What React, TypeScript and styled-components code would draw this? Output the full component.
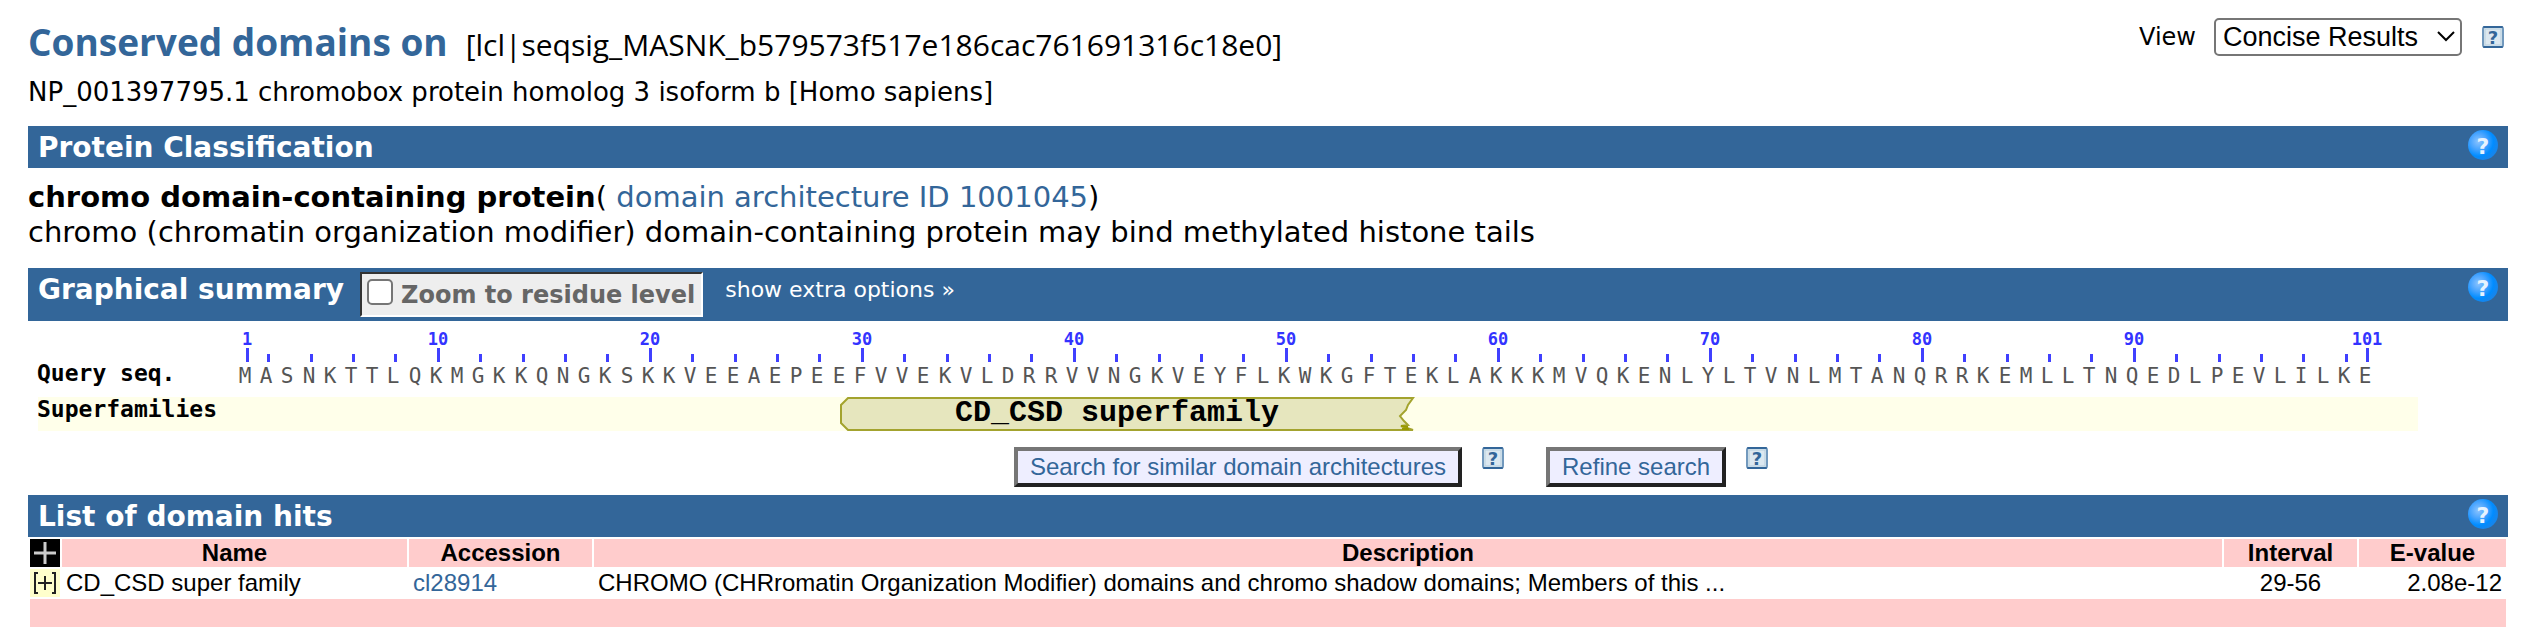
import React from "react";
import styled, { createGlobalStyle } from "styled-components";

const BLUE = "#336699";
const VERDANA = `Verdana, "DejaVu Sans", sans-serif`;
const ARIAL = `"Liberation Sans", Arial, sans-serif`;
const FIXED = `"DejaVu Sans Mono", monospace`;

const GlobalStyle = createGlobalStyle`
  *, *::before, *::after { box-sizing: border-box; }
  body {
    margin: 0;
    background: #fff;
    color: #000;
    font-family: ${VERDANA};
  }
`;

const Page = styled.main`
  padding: 16px 22px 16px 28px;
`;

const Header = styled.header`
  display: flex;
  justify-content: space-between;
  align-items: flex-start;
  margin-bottom: 18px;
`;

const Title = styled.h1`
  display: flex;
  align-items: baseline;
  gap: 18px;
  margin: 0 0 8px;
  font: bold 37px/52px "Open Sans", sans-serif;
  color: ${BLUE};
`;

const QueryId = styled.span`
  font-size: 30px;
  line-height: 40px;
  font-weight: normal;
  color: #000;
`;

const Subtitle = styled.p`
  margin: 0;
  font-size: 26px;
  line-height: 32px;
`;

const ViewControls = styled.div`
  display: flex;
  align-items: center;
  padding: 2px 4px 0 0;
`;

const ViewLabel = styled.label`
  margin-right: 18px;
  font-size: 24px;
`;

const SelectBox = styled.div`
  position: relative;
  display: flex;
  margin-right: 20px;
`;

const Select = styled.select`
  appearance: none;
  width: 248px;
  height: 38px;
  padding: 0 32px 0 7px;
  border: 2px solid #767676;
  border-radius: 5px;
  background: #fff;
  color: #000;
  font: 27px/34px ${ARIAL};
`;

const Chevron = styled.svg`
  position: absolute;
  right: 7px;
  top: 13px;
  pointer-events: none;
`;

const IconButton = styled.button`
  display: block;
  flex: none;
  padding: 0;
  border: 0;
  background: none;
  cursor: pointer;

  svg { display: block; }
`;

const HelpMark = styled.text`
  font-family: "DejaVu Sans", sans-serif;
  font-weight: bold;
  text-anchor: middle;
`;

const SectionBar = styled.div`
  display: flex;
  align-items: flex-start;
  min-height: 42px;
  padding: 0 10px;
  background: ${BLUE};
  color: #fff;
`;

const SectionTitle = styled.h2`
  margin: 2px 0 0;
  font-size: 28px;
  line-height: 40px;
`;

const BarHelp = styled.div`
  margin: 4px 0 0 auto;
`;

const ZoomToggle = styled.label`
  display: flex;
  align-items: center;
  gap: 8px;
  height: 45px;
  margin: 4px 22px 4px 16px;
  padding: 0 6px 0 5px;
  border: 2px solid;
  border-color: #333 #fff #fff #333;
  background: #eee;
  color: #666;
  font-size: 24px;
  font-weight: bold;
`;

const Checkbox = styled.input`
  appearance: none;
  width: 26px;
  height: 26px;
  margin: 0 0 6px;
  border: 2px solid #767676;
  border-radius: 5px;
  background: #fff;
`;

const BarLink = styled.a`
  margin-top: 8px;
  color: #fff;
  font-size: 22px;
  line-height: 28px;
  text-decoration: none;
`;

const Classification = styled.section`
  padding: 12px 0 18px;
  font-size: 29px;
  line-height: 35px;

  p { margin: 0; }
`;

const Link = styled.a`
  color: ${BLUE};
  text-decoration: none;
`;

const Chart = styled.svg`
  display: block;
  width: 100%;
  height: auto;
`;

const TrackLabel = styled.text`
  font: bold 23px ${FIXED};
`;

const TickLabel = styled.text`
  font: bold 17px ${FIXED};
  fill: #3333ff;
  text-anchor: middle;
`;

const Residue = styled.text`
  font: 21px ${FIXED};
  fill: #555;
  text-anchor: middle;
`;

const DomainLabel = styled.text`
  font: bold 30px "Liberation Mono", monospace;
  text-anchor: middle;
`;

const Actions = styled.div`
  display: flex;
  justify-content: center;
  align-items: flex-start;
  gap: 20px;
  padding: 8px 0 8px 246px;
`;

const ActionGroup = styled.div`
  display: flex;
  align-items: flex-start;
  gap: 20px;
  margin-right: 22px;

  &:last-child { margin-right: 0; }
`;

const ActionButton = styled.button`
  height: 40px;
  padding: 0 12px;
  border: 4px solid;
  border-color: #767676 #222 #222 #767676;
  background: #eeeeff;
  color: ${BLUE};
  font: 24px/32px ${ARIAL};
  cursor: pointer;
`;

const HitsTable = styled.table`
  width: 100%;
  table-layout: fixed;
  border-collapse: separate;
  border-spacing: 2px;
  font: 24px/28px ${ARIAL};
`;

const Column = styled.col<{ $width?: number }>`
  ${({ $width }) => $width && `width: ${$width}px;`}
`;

const HeadCell = styled.th`
  height: 28px;
  padding: 0;
  background: #ffcccc;
`;

const Cell = styled.td<{ $align?: string }>`
  height: 28px;
  padding: 0 4px;
  text-align: ${({ $align }) => $align ?? "left"};
  white-space: nowrap;
`;

const ToggleCell = styled.td<{ $dark?: boolean }>`
  height: 28px;
  padding: 0;
  background: ${({ $dark }) => ($dark ? "#000" : "#ffffcc")};
`;

const FooterCell = styled.td`
  height: 28px;
  padding: 0;
  background: #ffcccc;
`;

function SmallHelp({ label }: { label: string }) {
  return (
    <IconButton type="button" aria-label={label}>
      <svg width="22" height="22" viewBox="0 0 22 22">
        <rect x="1" y="1" width="20" height="20" rx="2" fill="#dce8f0" stroke="#7299bd" strokeWidth="2" />
        <path d="M2 1H20M2 21H20" stroke={BLUE} strokeWidth="2" strokeLinecap="round" />
        <rect x="3" y="3" width="16" height="16" fill="none" stroke="#b8cfde" />
        <HelpMark x="11" y="18" fontSize="18" fill={BLUE}>?</HelpMark>
      </svg>
    </IconButton>
  );
}

function RoundHelp({ label }: { label: string }) {
  const id = React.useId();
  return (
    <BarHelp>
      <IconButton type="button" aria-label={label}>
        <svg width="30" height="30" viewBox="0 0 30 30">
          <defs>
            <radialGradient id={id} cx="0.35" cy="0.38" r="0.62">
              <stop offset="0" stopColor="#8cc4ff" />
              <stop offset="0.45" stopColor="#45a3ff" />
              <stop offset="0.8" stopColor="#008cff" />
              <stop offset="1" stopColor="#1486ee" />
            </radialGradient>
          </defs>
          <circle cx="15" cy="15" r="15" fill={`url(#${id})`} />
          <HelpMark x="15" y="24" fontSize="22" fill="#e6f3ff">?</HelpMark>
        </svg>
      </IconButton>
    </BarHelp>
  );
}

const SEQUENCE =
  "MASNKTTLQKMGKKQNGKSKKVEEAEPEEFVVEKVLDRRVVNGKVEYFLKWKGFTEKLAKKKMVQKENLYLTVNLMTANQRRKEMLLTNQEDLPEVLILKE";
const STEP = 21.2;
const tickX = (position: number) => Math.round(219 + STEP * (position - 1));

const positions = Array.from(SEQUENCE, (_, i) => i + 1);
const isMajor = (n: number) => n === 1 || n === SEQUENCE.length || (n % 10 === 0 && n < 100);

function SummaryChart() {
  return (
    <Chart viewBox="0 0 2480 118" role="img" aria-label="Domain hits along the query sequence">
      {positions.filter(isMajor).map((n) => (
        <g key={n}>
          <TickLabel x={tickX(n)} y={24}>{n}</TickLabel>
          <rect x={tickX(n) - 1} y={27} width={3} height={14} fill="#4040ff" />
        </g>
      ))}
      {positions.filter((n) => n % 2 === 0 && !isMajor(n)).map((n) => (
        <rect key={n} x={tickX(n) - 1} y={33} width={3} height={8} fill="#4040ff" />
      ))}
      <TrackLabel x={9} y={60}>Query seq.</TrackLabel>
      {positions.map((n) => (
        <Residue key={n} x={tickX(n) - 2} y={62}>{SEQUENCE[n - 1]}</Residue>
      ))}
      <rect x={10} y={76} width={2380} height={34} fill="#ffffea" />
      <TrackLabel x={9} y={96}>Superfamilies</TrackLabel>
      <path
        d="M820 77H1385L1380 84L1378 89L1372 95L1376 100L1380 104L1373 105L1379 107L1385 109H820L813 102V84Z"
        fill="#e6e6be"
        stroke="#a3a32e"
        strokeWidth="2"
      />
      <path d="M1373 105L1380 106M1374 108H1381" stroke="#999900" strokeWidth="2" />
      <DomainLabel x={1089} y={100}>CD_CSD superfamily</DomainLabel>
    </Chart>
  );
}

export default function App() {
  return (
    <>
      <GlobalStyle />
      <Page>
        <Header>
          <div>
            <Title>
              Conserved domains on
              <QueryId>[lcl|seqsig_MASNK_b579573f517e186cac761691316c18e0]</QueryId>
            </Title>
            <Subtitle>NP_001397795.1 chromobox protein homolog 3 isoform b [Homo sapiens]</Subtitle>
          </div>
          <ViewControls>
            <ViewLabel htmlFor="view">View</ViewLabel>
            <SelectBox>
              <Select id="view">
                <option>Concise Results</option>
              </Select>
              <Chevron width="18" height="12" viewBox="0 0 18 12">
                <path d="M1 1L9 9L17 1" fill="none" stroke="#000" strokeWidth="2" />
              </Chevron>
            </SelectBox>
            <SmallHelp label="Help on views" />
          </ViewControls>
        </Header>

        <SectionBar>
          <SectionTitle>Protein Classification</SectionTitle>
          <RoundHelp label="Help on protein classification" />
        </SectionBar>
        <Classification>
          <p>
            <b>chromo domain-containing protein</b>( <Link href="#architecture">domain architecture ID 1001045</Link>)
          </p>
          <p>
            chromo (chromatin organization modifier) domain-containing protein may bind methylated histone tails
          </p>
        </Classification>

        <SectionBar>
          <SectionTitle>Graphical summary</SectionTitle>
          <ZoomToggle>
            <Checkbox type="checkbox" />
            Zoom to residue level
          </ZoomToggle>
          <BarLink href="#options">show extra options »</BarLink>
          <RoundHelp label="Help on the graphical summary" />
        </SectionBar>
        <SummaryChart />
        <Actions>
          <ActionGroup>
            <ActionButton type="button">Search for similar domain architectures</ActionButton>
            <SmallHelp label="Help on similar architectures" />
          </ActionGroup>
          <ActionGroup>
            <ActionButton type="button">Refine search</ActionButton>
            <SmallHelp label="Help on refining the search" />
          </ActionGroup>
        </Actions>

        <SectionBar>
          <SectionTitle>List of domain hits</SectionTitle>
          <RoundHelp label="Help on domain hits" />
        </SectionBar>
        <HitsTable>
          <colgroup>
            <Column $width={30} />
            <Column $width={345} />
            <Column $width={183} />
            <Column />
            <Column $width={133} />
            <Column $width={147} />
          </colgroup>
          <thead>
            <tr>
              <ToggleCell $dark>
                <IconButton type="button" aria-label="Expand all hits">
                  <svg width="30" height="28" viewBox="0 0 30 28">
                    <path d="M4 14H26M15 3V25" stroke="#ccc" strokeWidth="3" />
                  </svg>
                </IconButton>
              </ToggleCell>
              <HeadCell>Name</HeadCell>
              <HeadCell>Accession</HeadCell>
              <HeadCell>Description</HeadCell>
              <HeadCell>Interval</HeadCell>
              <HeadCell>E-value</HeadCell>
            </tr>
          </thead>
          <tbody>
            <tr>
              <ToggleCell>
                <IconButton type="button" aria-label="Expand CD_CSD super family">
                  <svg width="30" height="28" viewBox="0 0 30 28">
                    <path d="M8 4H5V24H8M22 4H25V24H22M8 14H22M15 7V21" fill="none" stroke="#222" strokeWidth="2" />
                  </svg>
                </IconButton>
              </ToggleCell>
              <Cell>CD_CSD super family</Cell>
              <Cell>
                <Link href="#cl28914">cl28914</Link>
              </Cell>
              <Cell>
                CHROMO (CHRromatin Organization Modifier) domains and chromo shadow domains; Members of this ...
              </Cell>
              <Cell $align="center">29-56</Cell>
              <Cell $align="right">2.08e-12</Cell>
            </tr>
            <tr>
              <FooterCell colSpan={6} />
            </tr>
          </tbody>
        </HitsTable>
      </Page>
    </>
  );
}
